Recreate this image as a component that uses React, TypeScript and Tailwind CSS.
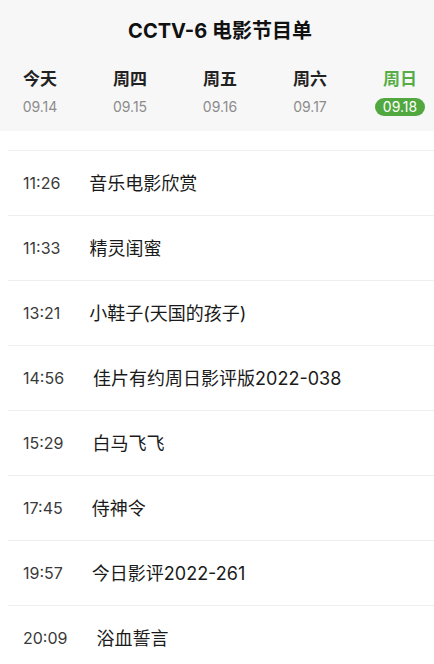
const days = [
    { label: '今天', date: '09.14' },
    { label: '周四', date: '09.15' },
    { label: '周五', date: '09.16' },
    { label: '周六', date: '09.17' },
    { label: '周日', date: '09.18', active: true },
];

const programs = [
    { time: '11:26', title: '音乐电影欣赏' },
    { time: '11:33', title: '精灵闺蜜' },
    { time: '13:21', title: '小鞋子(天国的孩子)' },
    { time: '14:56', title: '佳片有约周日影评版2022-038' },
    { time: '15:29', title: '白马飞飞' },
    { time: '17:45', title: '侍神令' },
    { time: '19:57', title: '今日影评2022-261' },
    { time: '20:09', title: '浴血誓言' },
];

export default function App() {
    return (
        <div className="w-[434px] h-[664px] overflow-hidden bg-white font-['Inter','Noto_Sans_CJK_SC',sans-serif]">
            {/* Header with channel title and day tabs */}
            <div className="h-[131px] bg-[#f7f7f7] flex flex-col">
                <h1 className="pt-[17px] pl-[6px] text-center text-[20px] leading-[28px] font-bold text-[#111]">
                    CCTV-6 电影节目单
                </h1>
                <div className="flex gap-[30px] pl-[10px] mt-[22px]">
                    {days.map(d => (
                        <div key={d.date} className="w-[60px] flex flex-col items-center">
                            <span
                                className={`text-[17px] leading-[24px] font-bold ${d.active ? 'text-[#56ad47]' : 'text-[#222]'}`}
                            >
                                {d.label}
                            </span>
                            {d.active ? (
                                <span className="mt-[7px] h-[18px] w-[50px] rounded-full bg-[#50a83f] text-white text-[14px] leading-[18px] text-center">
                                    {d.date}
                                </span>
                            ) : (
                                <span className="mt-[6px] text-[14px] leading-[20px] text-[#8c8c8c]">{d.date}</span>
                            )}
                        </div>
                    ))}
                </div>
            </div>

            {/* Program list */}
            <div className="pt-[19px] ml-[8px]">
                {programs.map(p => (
                    <div
                        key={p.time}
                        className="h-[65px] border-t border-[#eeeeee] flex items-center gap-[29px] pl-[15px]"
                    >
                        <span className="text-[16px] text-[#3a3a3a]">{p.time}</span>
                        <span className="text-[18px] text-[#1a1a1a]">{p.title}</span>
                    </div>
                ))}
            </div>
        </div>
    );
}
